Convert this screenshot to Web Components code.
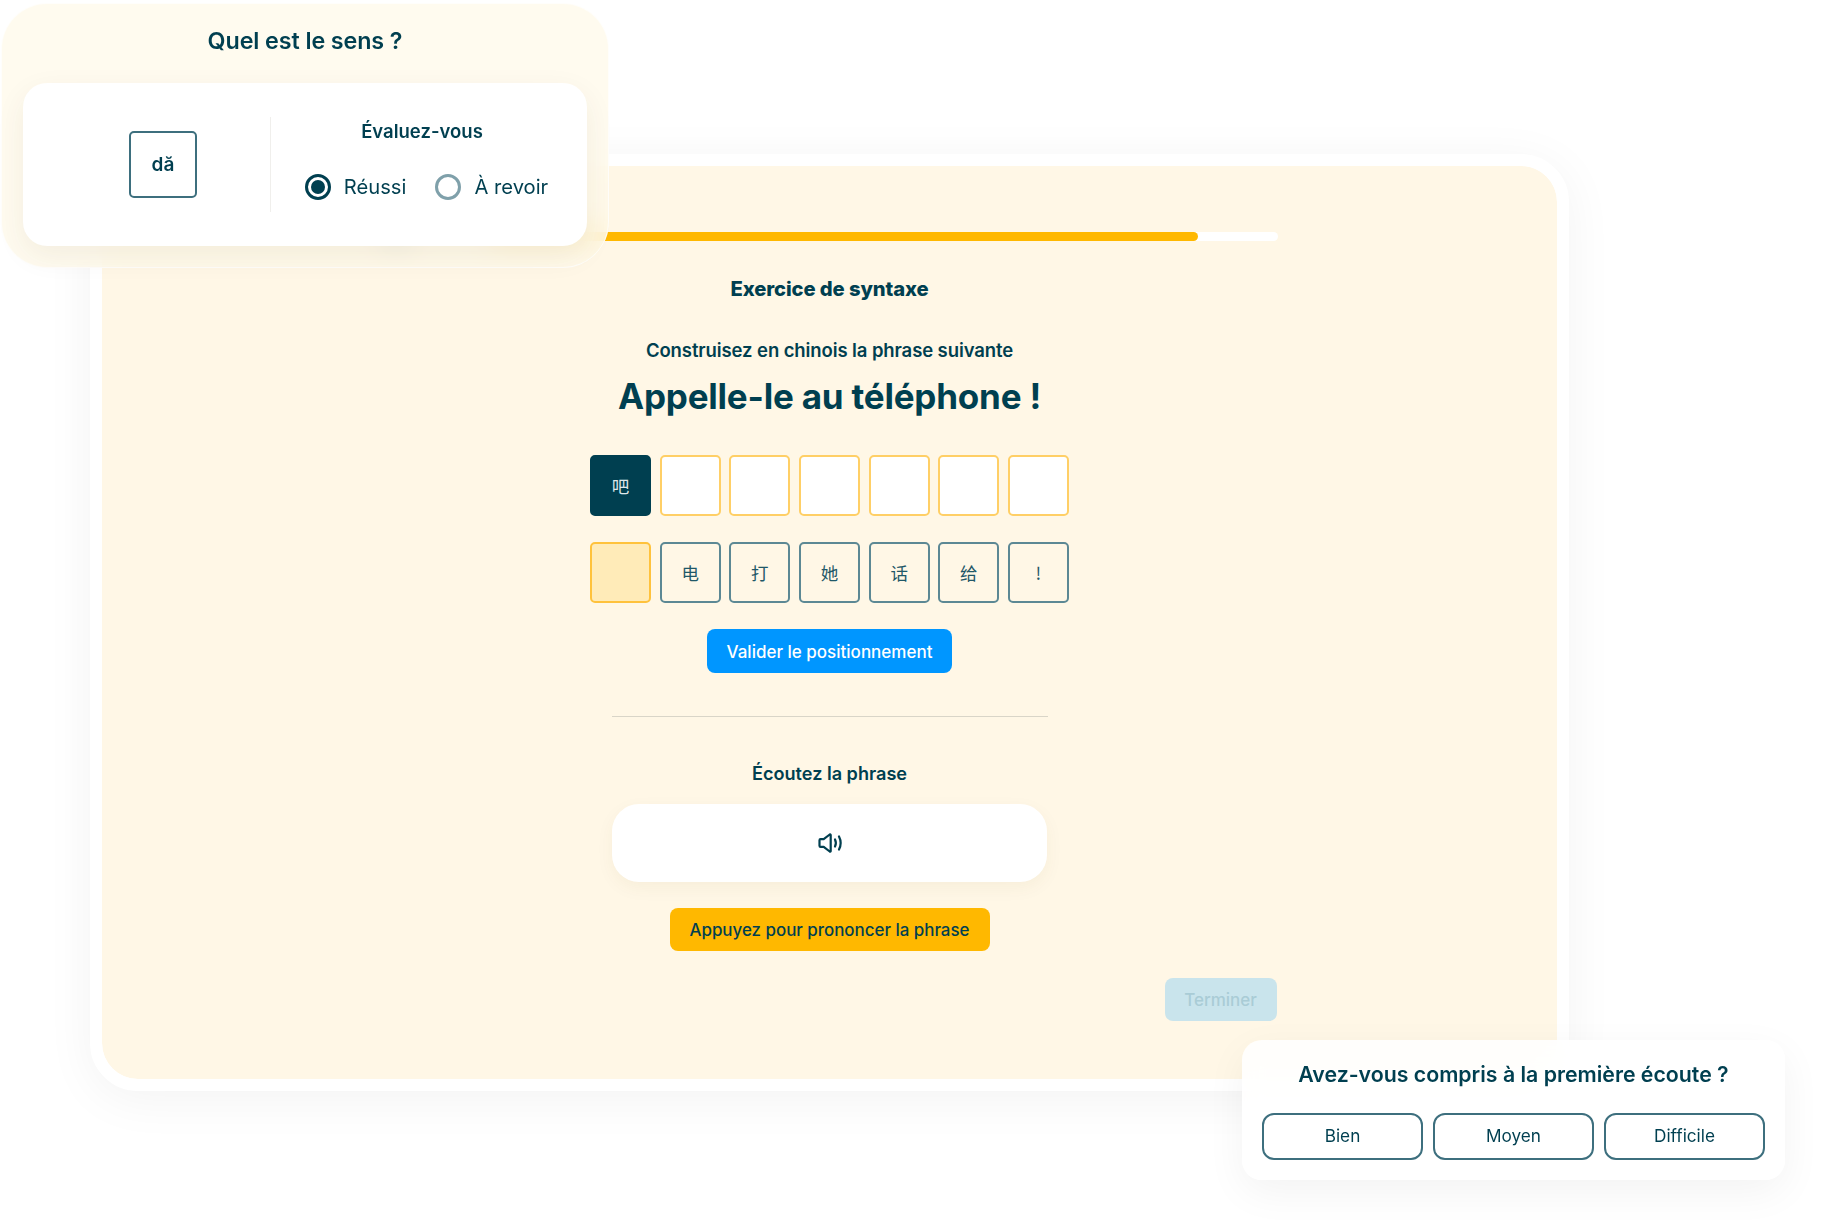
<!DOCTYPE html>
<html lang="fr"><head><meta charset="utf-8"><title>Exercice</title>
<style>
html,body{margin:0;padding:0;background:#fff}
body{font-family:Inter,"Noto Sans CJK SC",sans-serif;color:#003f50}
</style></head><body>
<exercise-stage>
  <lesson-panel></lesson-panel>
  <sens-card slot="over"></sens-card>
  <ecoute-card slot="over"></ecoute-card>
</exercise-stage>
<script>
const def=(name,html)=>{customElements.define(name,class extends HTMLElement{constructor(){super();this.attachShadow({mode:'open'}).innerHTML=html;}})};
const ink='#003f50';

def('exercise-stage',`<style>:host{display:block;position:relative;width:1833px;height:1227px;overflow:hidden;padding:154px 0 0 90px;box-sizing:border-box}</style><slot></slot><slot name="over"></slot>`);

def('ui-tile',`<style>
:host{display:flex;align-items:center;justify-content:center;box-sizing:border-box;height:61px;border-radius:5px;border:2px solid #ffcf66;background:#fff;font:400 17.5px "Noto Sans CJK SC",sans-serif;color:#1f5868}
:host([kind=dark]){background:#003f50;border-color:#003f50;color:#dfe8ea}
:host([kind=drop]){background:#ffebb8;border-color:#ffc23c}
:host([kind=word]){background:transparent;border-color:#5c8894}
</style><slot></slot>`);

def('ui-btn',`<style>
:host{display:inline-flex;align-items:center;justify-content:center;box-sizing:border-box;height:44px;padding-top:1px;border-radius:8px;font:500 17px Inter,sans-serif;background:#0096ff;color:#fff}
:host([kind=amber]){background:#ffb800;color:${ink};height:43px;font-size:16.9px}
:host([kind=off]){background:#c9e4ec;color:#a9ccd6;height:43px;padding-top:0}
</style><slot></slot>`);

def('lesson-panel',`<style>
:host{display:flex;flex-direction:column;align-items:center;box-sizing:border-box;width:1479px;height:937px;border:12px solid #fff;border-radius:48px;background:#fff7e6;background-clip:padding-box;padding-top:66px;box-shadow:0 8px 50px rgba(0,0,0,.05)}
.bar{display:flex;align-items:center;width:896px;height:9px;gap:81px;flex:none}
.bar svg{flex:none;width:28px;height:28px}
.track{flex:1;height:9px;border-radius:5px;background:#fff;overflow:hidden}
.fill{width:89.9%;height:100%;background:#ffb800;border-radius:5px}
h1,h2,h3,p{margin:0;text-align:center}
.t1{margin-top:33px;font:800 20.2px/30px Inter,sans-serif;letter-spacing:-.1px}
.t2{margin-top:33px;font:600 18.5px/26px Inter,sans-serif;letter-spacing:-.1px}
.t3{margin-top:8px;font:700 35px/50px Inter,sans-serif;letter-spacing:-.2px}
.grid{display:grid;grid-template-columns:repeat(7,61px);column-gap:8.67px;width:479px}
.g1{margin-top:34px}.g2{margin-top:26px}
ui-btn.val{margin-top:26px;width:245px}
hr{margin:43px 0 0;border:0;height:1px;width:436px;background:#d9d5c8}
.t4{margin-top:43px;font:600 18.1px/26px Inter,sans-serif}
.play{margin-top:18px;width:435px;height:78px;border-radius:27px;background:#fff;box-shadow:0 6px 18px rgba(90,70,20,.05);display:flex;align-items:center;justify-content:center}
ui-btn.say{margin-top:26px;width:320px}
.end{margin-top:27px;width:894px;display:flex;justify-content:flex-end}
ui-btn.fin{width:112px}
</style>
<div class="bar">
  <svg viewBox="0 0 24 24" fill="none" stroke="#003f50" stroke-width="3"><path d="M5 5l14 14M19 5L5 19"/></svg>
  <div class="track"><div class="fill"></div></div>
</div>
<h1 class="t1">Exercice de syntaxe</h1>
<p class="t2">Construisez en chinois la phrase suivante</p>
<h2 class="t3">Appelle-le au téléphone !</h2>
<div class="grid g1"><ui-tile kind="dark">吧</ui-tile><ui-tile></ui-tile><ui-tile></ui-tile><ui-tile></ui-tile><ui-tile></ui-tile><ui-tile></ui-tile><ui-tile></ui-tile></div>
<div class="grid g2"><ui-tile kind="drop"></ui-tile><ui-tile kind="word">电</ui-tile><ui-tile kind="word">打</ui-tile><ui-tile kind="word">她</ui-tile><ui-tile kind="word">话</ui-tile><ui-tile kind="word">给</ui-tile><ui-tile kind="word">!</ui-tile></div>
<ui-btn class="val">Valider le positionnement</ui-btn>
<hr>
<h3 class="t4">Écoutez la phrase</h3>
<div class="play"><svg width="26" height="26" viewBox="0 0 26 26" fill="none" stroke="#003f50" stroke-width="2.2" stroke-linecap="round" stroke-linejoin="round"><path d="M2.500 10.200v5.600c0 .7.500 1.100 1.100 1.100h3.100l6 4.600c.5.300 1 0 1-.6V5.100c0-.6-.5-.9-1-.6l-6 4.600H3.600c-.6 0-1.100.4-1.100 1.100z"/><path d="M18 9.500c1.100 2.200 1.100 4.800 0 7"/><path d="M22 6.500c2.100 4.100 2.100 8.900 0 13"/></svg></div>
<ui-btn kind="amber" class="say">Appuyez pour prononcer la phrase</ui-btn>
<div class="end"><ui-btn kind="off" class="fin">Terminer</ui-btn></div>`);

def('sens-card',`<style>
:host{position:absolute;left:1px;top:3px;width:608px;height:265px;box-sizing:border-box;border-radius:46px;background:rgba(255,250,235,.78);backdrop-filter:blur(14px);-webkit-backdrop-filter:blur(14px);border:1px solid rgba(255,255,255,.7);display:flex;flex-direction:column;align-items:center;padding:0 20px}
h2{margin:0;font:600 23.3px/30px Inter,sans-serif;text-align:center;margin-top:22px;letter-spacing:-.1px}
.box{margin-top:27px;width:564px;height:163px;flex:none;background:#fff;border-radius:24px;box-shadow:0 10px 30px rgba(80,60,0,.07);display:flex;align-items:center}
.left{width:214px;padding-left:33px;height:95px;display:flex;align-items:center;justify-content:center;border-right:1px solid #f0efec;flex:none}
.sq{width:68px;height:67px;box-sizing:border-box;border:2px solid #3d6f7e;border-radius:5px;display:flex;align-items:center;justify-content:center;font:600 19px Inter,sans-serif}
.right{flex:1;display:flex;flex-direction:column;align-items:center;margin-top:-11px}
h3{margin:0 14px 0 0;font:600 18.5px/24px Inter,sans-serif}
.opts{display:flex;margin-top:31px;margin-right:5px;align-items:center;gap:29px}
.o{display:flex;align-items:center;gap:13px;font:400 20.2px/26px Inter,sans-serif}
.r{width:26px;height:26px;box-sizing:border-box;border-radius:50%;border:3px solid #003f50;display:flex;align-items:center;justify-content:center}
.r i{width:14px;height:14px;border-radius:50%;background:#003f50}
.r.off{border-color:#7fa0aa}
</style>
<h2>Quel est le sens ?</h2>
<div class="box">
  <div class="left"><div class="sq">dă</div></div>
  <div class="right"><h3>Évaluez-vous</h3>
    <div class="opts"><div class="o"><span class="r"><i></i></span>Réussi</div><div class="o"><span class="r off"></span>À revoir</div></div>
  </div>
</div>`);

def('ecoute-card',`<style>
:host{position:absolute;left:1242px;top:1040px;width:543px;height:140px;box-sizing:border-box;border-radius:20px;background:rgba(255,255,255,.86);backdrop-filter:blur(14px);-webkit-backdrop-filter:blur(14px);box-shadow:0 12px 40px rgba(0,0,0,.05);display:flex;flex-direction:column;align-items:center;padding:0 20px}
h2{margin:0;margin-top:20px;font:600 21.3px/28px Inter,sans-serif;text-align:center}
.row{margin-top:25px;display:grid;grid-template-columns:repeat(3,161px);column-gap:10px}
.row div{height:47px;box-sizing:border-box;border:2px solid #3d6f7e;border-radius:12px;display:flex;align-items:center;justify-content:center;font:400 17.2px Inter,sans-serif;padding-bottom:2px}
</style>
<h2>Avez-vous compris à la première écoute ?</h2>
<div class="row"><div>Bien</div><div>Moyen</div><div>Difficile</div></div>`);
</script>
</body></html>
